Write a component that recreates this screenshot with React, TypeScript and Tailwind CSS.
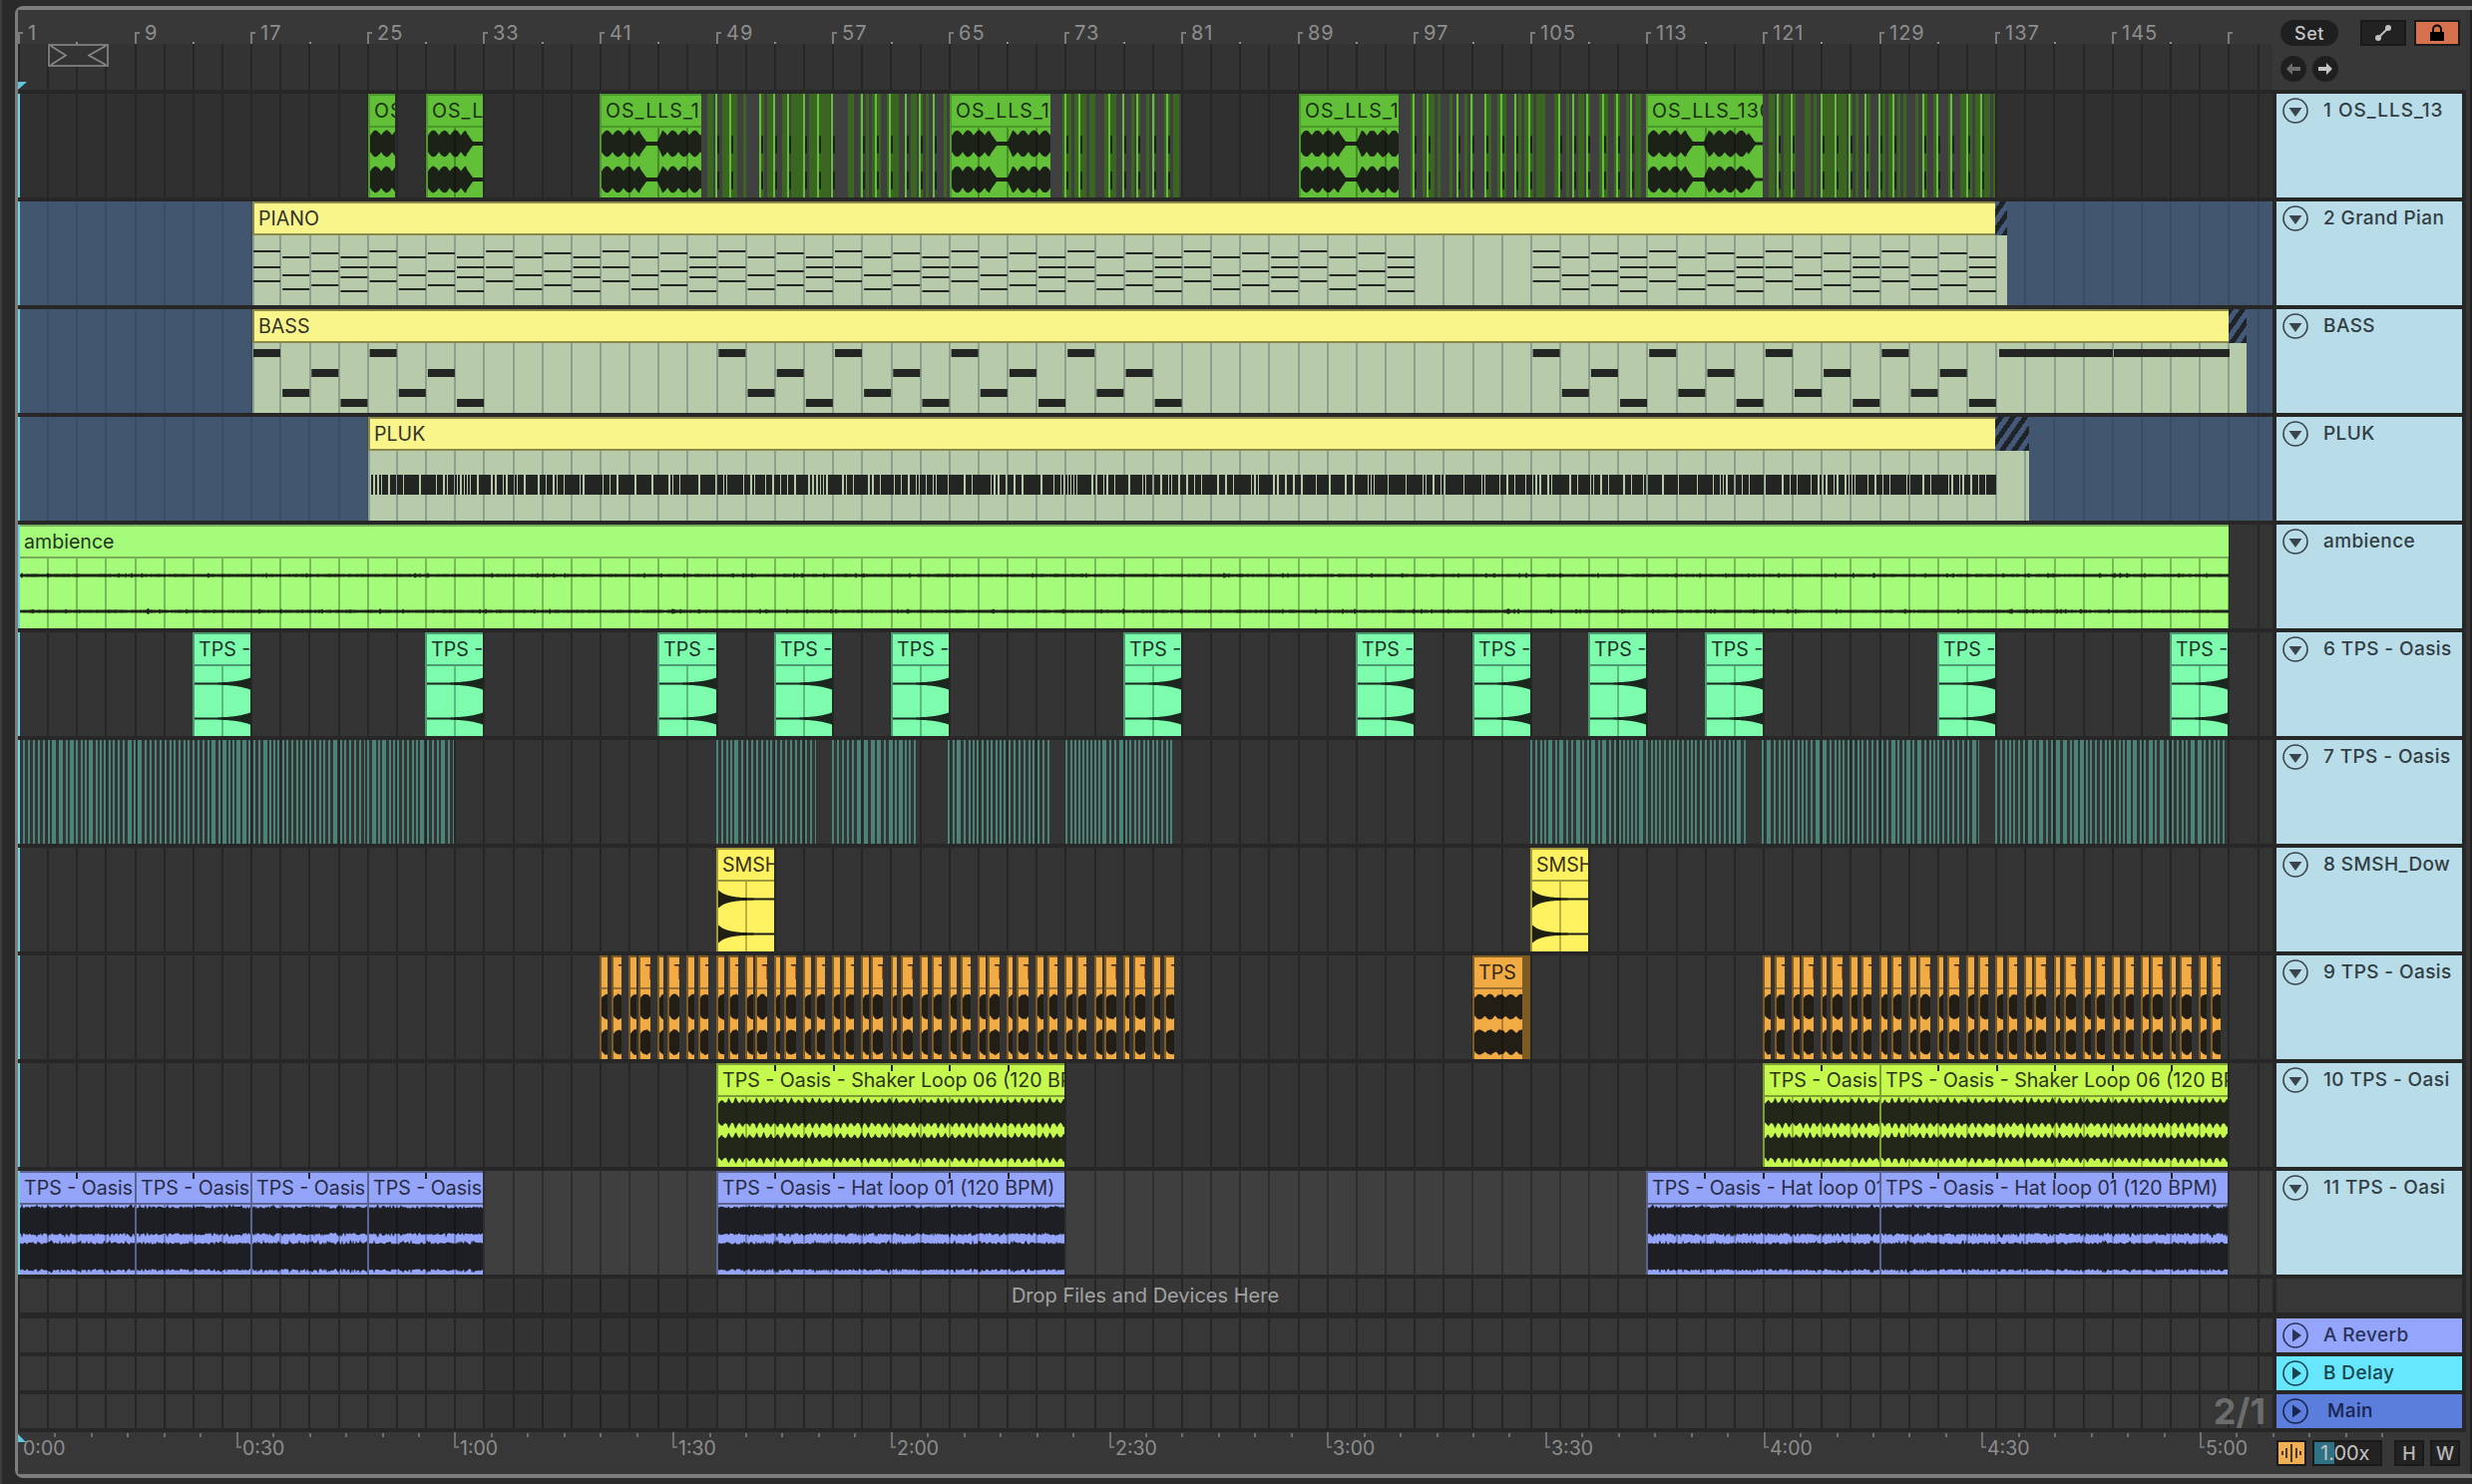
import React from 'react';

// timeline geometry, measured off the arrangement
const ORIGIN = 18;
const BAR = 14.575;
const barX = (bar: number) => Math.round(ORIGIN + (bar - 1) * BAR);
const laneX = (x: number) => x - ORIGIN;

const FONT = "font-['Inter','Liberation_Sans',sans-serif]";
const GRID = 'bg-[repeating-linear-gradient(90deg,#262626_0,#262626_2px,transparent_2px,transparent_29.15px)]';
const GRID_BLUE = 'bg-[repeating-linear-gradient(90deg,#3a4d66_0,#3a4d66_2px,transparent_2px,transparent_29.15px)]';
const GRID_SOFT = 'bg-[repeating-linear-gradient(90deg,#2e2e2e_0,#2e2e2e_2px,transparent_2px,transparent_29.15px)]';

const rng = (seed: number) => () => (seed = (seed * 16807) % 2147483647) / 2147483647;

type Kind = 'os' | 'amb' | 'mint' | 'smsh' | 'orange' | 'lime' | 'peri';

const THEME: Record<Kind, { bg: string; border: string; line: string; text: string; wave: string; cy: [number, number] }> = {
  os: { bg: 'bg-[#62c038]', border: 'border-[#4b9a2b]', line: 'bg-[#4b9a2b]', text: 'text-[#1c3012] tracking-[1px]', wave: '#1d2219', cy: [16, 52] },
  amb: { bg: 'bg-[#a4fc7a]', border: 'border-[#76ad58]', line: 'bg-[#76ad58]', text: 'text-[#24331c]', wave: '#1c2418', cy: [17, 53] },
  mint: { bg: 'bg-[#7dfcae]', border: 'border-[#4a9a70]', line: 'bg-[#4a9a70]', text: 'text-[#1d3328]', wave: '#1b261f', cy: [17.5, 52.5] },
  smsh: { bg: 'bg-[#fff261]', border: 'border-[#a19a3b]', line: 'bg-[#a19a3b]', text: 'text-[#33311a]', wave: '#1f1f14', cy: [17.5, 52.5] },
  orange: { bg: 'bg-[#f1ab45]', border: 'border-[#7f5b24]', line: 'bg-[#9c7030]', text: 'text-[#33260f]', wave: '#231e15', cy: [17.5, 53] },
  lime: { bg: 'bg-[#c6f94e]', border: 'border-[#7e9f32]', line: 'bg-[#7e9f32]', text: 'text-[#2a3312]', wave: '#23271a', cy: [16, 51] },
  peri: { bg: 'bg-[#94a4f9]', border: 'border-[#5a648f]', line: 'bg-[#5a648f]', text: 'text-[#272c44]', wave: '#1d1f25', cy: [16, 52] },
};

const amplitude = (kind: Kind, x: number, w: number, r: () => number): number => {
  switch (kind) {
    case 'os': {
      const m = x % 116;
      if (m > 45 && m < 56) return 2;
      if (m >= 39 && m <= 45) return 2 + (45 - m) * 1.4;
      if (m >= 56 && m <= 60) return 2 + (m - 56) * 2.2;
      if (m > 100) return Math.max(1.5, 12 - (m - 100) * 1.4);
      return 8 + 5 * Math.abs(Math.sin((Math.PI * m) / 11)) + r() * 0.6;
    }
    case 'amb':
      return 1.3 + r() * 0.4 + (r() > 0.975 ? 1.2 : 0);
    case 'mint':
      return 1 + 5 * Math.pow(x / w, 4);
    case 'smsh':
      return 1 + 8 * Math.exp(-x / 9);
    case 'orange':
      return 8.5 + 3.5 * Math.abs(Math.sin(x * 0.3)) + r() * 1.2;
    case 'lime': {
      const t = (x % 7) / 7;
      const scale = 0.55 + 0.45 * Math.abs(Math.sin(Math.floor(x / 7) * 2.3));
      return 9.5 + 7 * scale * Math.pow(1 - Math.abs(2 * t - 1), 2) + r() * 1.2;
    }
    case 'peri':
      return 12.2 + r() * 2.4 + (r() > 0.9 ? 2.6 : 0);
  }
};

const channel = (kind: Kind, w: number, cy: number, seed: number) => {
  const r = rng(seed);
  const top: string[] = [];
  const bottom: string[] = [];
  for (let x = 0; x <= w; x += 1) {
    const a = amplitude(kind, x, w, r);
    top.push(`${x} ${(cy - a).toFixed(1)}`);
    bottom.unshift(`${x} ${(cy + a).toFixed(1)}`);
  }
  return `M${top.join('L')}L${bottom.join('L')}Z`;
};

const gridLines = (left: number, width: number) => {
  const out: number[] = [];
  for (let k = 0; k < 80; k++) {
    const x = Math.round(ORIGIN + 29.15 * k) - left;
    if (x > 2 && x < width) out.push(x);
  }
  return out;
};

const WaveBody: React.FC<{ kind: Kind; left: number; width: number }> = ({ kind, left, width }) => (
  <svg width={width} height={70} className="block shrink-0">
    <path d={channel(kind, width, THEME[kind].cy[0], left * 7 + 11)} fill={THEME[kind].wave} />
    <path d={channel(kind, width, THEME[kind].cy[1], left * 13 + 29)} fill={THEME[kind].wave} />
    {gridLines(left + 2, width).map(x => (
      <rect key={x} x={x} y={0} width={2} height={70} fill="#000" opacity={0.27} />
    ))}
  </svg>
);

const Clip: React.FC<{ kind: Kind; from: number; to: number; name: string; ticks?: boolean; tail?: boolean }> = ({
  kind,
  from,
  to,
  name,
  ticks,
  tail,
}) => {
  const t = THEME[kind];
  const width = to - from;
  const tickXs: number[] = [];
  if (ticks) for (let x = 58.3; x < width - 4; x += 58.3) tickXs.push(Math.round(x) - 2);
  return (
    <div
      className={`absolute top-0 h-[104px] overflow-hidden border-l-2 border-t-2 ${t.bg} ${t.border} ${tail ? 'border-r-[8px]' : ''}`}
      style={{ left: laneX(from), width }}
    >
      <div className={`relative h-[30px] overflow-hidden whitespace-nowrap pl-[4px] text-[19.6px] leading-[30px] ${t.text}`}>
        {name}
        {tickXs.map(x => (
          <span key={x} className="absolute top-0 h-[6px] w-[2px] bg-[#222]" style={{ left: x }} />
        ))}
      </div>
      <div className={`h-[2px] ${t.line}`} />
      <WaveBody kind={kind} left={from} width={width - (tail ? 10 : 2)} />
    </div>
  );
};

// little runs of green slices between the OS_LLS clips
const OsStripes: React.FC<{ from: number; to: number }> = ({ from, to }) => {
  const width = to - from;
  const r = rng(from + 5);
  const bands: { x: number; dark: boolean }[] = [];
  for (let x = 0; x < width; x += 3) bands.push({ x, dark: r() > 0.5 });
  const bright: number[] = [];
  for (let c = 0; c < width; c += 102) {
    [14, 28, 58, 72, 86, 102].forEach(o => {
      if (c + o < width - 1) bright.push(c + o);
    });
  }
  return (
    <svg width={width} height={104} className="absolute top-0" style={{ left: laneX(from) }}>
      {bands.map(b => (
        <rect key={b.x} x={b.x} y={0} width={3} height={104} fill={b.dark ? '#3a6622' : '#404040'} />
      ))}
      {bright.map(x => (
        <g key={x}>
          <rect x={x} y={0} width={2} height={104} fill="#62c038" />
          <rect x={x + 2} y={42} width={2} height={18} rx={1} fill="#1d2219" />
          <rect x={x + 2} y={78} width={2} height={18} rx={1} fill="#1d2219" />
        </g>
      ))}
    </svg>
  );
};

const TealStripes: React.FC<{ from: number; to: number }> = ({ from, to }) => {
  const r = rng(from * 3 + 1);
  const bars: { x: number; w: number }[] = [];
  let x = 0;
  while (x < to - from) {
    const w = r() > 0.8 ? 4 : 2;
    bars.push({ x, w });
    x += w + (r() > 0.6 ? 2 : 3);
  }
  return (
    <svg width={to - from} height={104} className="absolute top-0" style={{ left: laneX(from) }}>
      {bars.map(b => (
        <rect key={b.x} x={b.x} y={0} width={b.w} height={104} fill="#4a8478" />
      ))}
    </svg>
  );
};

type Note = { x: number; y: number; w: number; h: number };

const pianoNotes = (): Note[] => {
  const cols = [
    [15, 31, 45],
    [21, 39, 53],
    [17, 35, 49],
    [21, 31, 41, 55],
  ];
  const out: Note[] = [];
  for (let k = 0; k < 60; k++) {
    const x = 29.15 * k;
    const bar = 17 + k * 2;
    if (bar >= 97 && bar < 105) continue;
    cols[k % 4].forEach(y => out.push({ x: x + 1, y, w: 27, h: 2 }));
  }
  return out;
};

const bassNotes = (): Note[] => {
  const ys = [6, 46, 26, 56];
  const out: Note[] = [];
  for (let k = 0; k < 60; k++) {
    const bar = 17 + k * 2;
    if (bar >= 33 && bar < 49) continue;
    if (bar >= 81 && bar < 105) continue;
    out.push({ x: 29.15 * k + 1, y: ys[k % 4], w: 27, h: 8 });
  }
  const tail = barX(137) - barX(17);
  out.push({ x: tail + 2, y: 6, w: 114, h: 8 }, { x: tail + 117, y: 6, w: 116, h: 8 });
  return out;
};

const plukNotes = (): Note[] => {
  const r = rng(77);
  const out: Note[] = [];
  let x = 3;
  const end = barX(137) - barX(25);
  while (x < end) {
    const v = r();
    const w = v > 0.7 ? 10 + Math.round(r() * 8) : v > 0.3 ? 6 : 2;
    out.push({ x, y: 24, w: Math.min(w, end - x), h: 20 });
    x += w + (r() > 0.5 ? 1 : 2);
  }
  return out;
};

const MidiClip: React.FC<{ name: string; from: number; titleTo: number; to: number; notes: Note[] }> = ({
  name,
  from,
  titleTo,
  to,
  notes,
}) => {
  const width = to - from;
  return (
    <div className="absolute top-0 h-[104px] overflow-hidden" style={{ left: laneX(from), width }}>
      <div className="flex h-[34px]">
        <div
          className="h-[34px] whitespace-nowrap border-y-2 border-l-2 border-[#8b8a48] bg-[#f9f58b] pl-[4px] text-[19.6px] leading-[30px] text-[#33332a]"
          style={{ width: titleTo - from }}
        >
          {name}
        </div>
        <div className="h-[34px] flex-1 bg-[repeating-linear-gradient(-55deg,#1f2428_0,#1f2428_5px,#44597a_5px,#44597a_10px)]" />
      </div>
      <svg width={width} height={70} className="block bg-[#b7caa9]">
        <rect x={0} y={0} width={2} height={70} fill="#8c9f8f" />
        {gridLines(from, width).map(x => (
          <rect key={x} x={x} y={0} width={2} height={70} fill="#8c9f8f" />
        ))}
        {notes.map((n, i) => (
          <rect key={i} x={n.x} y={n.y} width={n.w} height={n.h} fill="#222521" />
        ))}
      </svg>
    </div>
  );
};

const Toggle: React.FC<{ open?: boolean; color: string }> = ({ open, color }) => (
  <svg width={26} height={26} viewBox="0 0 26 26" className="shrink-0">
    <circle cx={13} cy={13} r={12} fill="none" stroke={color} strokeWidth={1.6} />
    {open ? <path d="M6.5 10h13L13 19z" fill={color} /> : <path d="M10 6.5v13L19 13z" fill={color} />}
  </svg>
);

const TrackHead: React.FC<{ name: string; wide?: boolean }> = ({ name, wide }) => (
  <div className="h-[104px] w-[186px] shrink-0 bg-[#b8dde8]">
    <div className={`flex h-[34px] items-center gap-[15px] pl-[6px] text-[19px] font-medium text-[#333d44] ${wide ? 'tracking-[1px]' : 'tracking-[0.4px]'}`}>
      <Toggle open color="#39444b" />
      <span className="whitespace-nowrap pt-[1px]">{name}</span>
    </div>
  </div>
);

const Track: React.FC<{ lane: string; name: string; wide?: boolean; children?: React.ReactNode }> = ({ lane, name, wide, children }) => (
  <div className="flex h-[104px] gap-[4px]">
    <div className={`relative h-[104px] w-[2260px] overflow-hidden ${lane}`}>
      {children}
      <div className="absolute left-0 top-0 h-full w-[2px] bg-[#6fd4e6]" />
    </div>
    <TrackHead name={name} wide={wide} />
  </div>
);

const EmptyLane: React.FC<{ children?: React.ReactNode }> = ({ children }) => (
  <div className={`relative h-[34px] w-[2260px] bg-[#373737] ${GRID}`}>
    <div className="absolute left-[467px] top-0 h-full w-[233px] bg-black/[0.07]" />
    {children}
  </div>
);

const ReturnRow: React.FC<{ name: string; bg: string; text: string; color: string; shift?: boolean; children?: React.ReactNode }> = ({
  name,
  bg,
  text,
  color,
  shift,
  children,
}) => (
  <div className="flex h-[34px] gap-[4px]">
    <EmptyLane>{children}</EmptyLane>
    <div className={`flex h-[34px] w-[186px] items-center gap-[15px] pl-[6px] text-[19px] font-medium tracking-[0.4px] ${bg} ${text}`}>
      <Toggle color={color} />
      <span className={shift ? 'ml-[4px] pt-[1px]' : 'pt-[1px]'}>{name}</span>
    </div>
  </div>
);

const TopRuler: React.FC = () => {
  const marks: number[] = [];
  for (let b = 1; b <= 153; b += 8) marks.push(b);
  const small: number[] = [];
  for (let b = 5; b <= 153; b += 8) small.push(b);
  return (
    <div className="relative h-[34px] bg-[#383838]">
      {marks.map(b => (
        <div key={b} className="absolute top-[22px] h-[12px] w-[5px] border-l-2 border-t-2 border-[#7b7b7b]" style={{ left: laneX(barX(b)) }} />
      ))}
      {marks
        .filter(b => b < 153)
        .map(b => (
          <span key={b} className="absolute top-[11px] text-[20px] leading-[24px] tracking-[1px] text-[#8e8e8e]" style={{ left: laneX(barX(b)) + 10 }}>
            {b}
          </span>
        ))}
      {small.map(b => (
        <div key={b} className="absolute top-[32px] h-[2px] w-[2px] bg-[#8e8e8e]" style={{ left: laneX(barX(b)) }} />
      ))}
    </div>
  );
};

const BottomRuler: React.FC = () => {
  const labels = ['0:00', '0:30', '1:00', '1:30', '2:00', '2:30', '3:00', '3:30', '4:00', '4:30', '5:00'];
  const small: number[] = [];
  for (let i = 1; i < 66; i++) if (i % 6 !== 0) small.push(i * 36.45);
  return (
    <div className="relative h-[42px] w-[2260px]">
      {small.map(x => (
        <div key={x} className="absolute top-[1px] h-[4px] w-[2px] bg-[#6f6f6f]" style={{ left: Math.round(x) }} />
      ))}
      {labels.map((l, i) => (
        <React.Fragment key={l}>
          {i > 0 && <div className="absolute top-0 h-[16px] w-[5px] border-b-2 border-l-2 border-[#6f6f6f]" style={{ left: Math.round(i * 218.7) }} />}
          <span className="absolute top-[4px] text-[19.5px] leading-[24px] text-[#8e8e8e]" style={{ left: Math.round(i * 218.7) + (i > 0 ? 6 : 5) }}>
            {l}
          </span>
        </React.Fragment>
      ))}
      <svg width={10} height={10} className="absolute left-0 top-[2px]">
        <path d="M0 0L8 8H0z" fill="#5fc8dc" />
      </svg>
    </div>
  );
};

const ORANGE_CYCLE = [
  [[0, 8], [12, 22]],
  [[0, 8], [10, 22]],
  [[0, 6], [10, 22]],
  [[0, 8], [12, 22]],
];

const orangeRun = (startBar: number, cols: number) => {
  const out: { from: number; to: number }[] = [];
  for (let k = 0; k < cols; k++) {
    const s = Math.round(ORIGIN + (startBar - 1) * BAR + 29.15 * k);
    ORANGE_CYCLE[k % 4].forEach(([a, b]) => out.push({ from: s + a, to: s + b }));
  }
  return out;
};

const MINT_BARS = [13, 29, 45, 53, 61, 77, 93, 101, 109, 117, 133, 149];
const TEAL_RUNS = [[18, 366], [368, 455], [718, 818], [834, 920], [950, 1052], [1068, 1178], [1534, 1750], [1766, 1984], [2000, 2233]];

const App: React.FC = () => {
  const dark = `bg-[#303030] ${GRID}`;
  const mid = `bg-[#343434] ${GRID}`;
  const blue = `bg-[#42576f] ${GRID_BLUE}`;

  return (
    <div className={`h-[1488px] w-[2478px] overflow-hidden border-l-2 border-[#3c3c3c] bg-[#2a2a2a] pl-[13px] pt-[6px] ${FONT}`}>
      <div className="flex h-[1476px] rounded-l-lg border-b-4 border-l-[3px] border-t-4 border-[#7d7d7d] bg-[#272727]">
        <div className="flex w-[2454px] flex-col gap-[4px]">
          {/* header: beat ruler, scene strip and set controls */}
          <div className="flex h-[80px] gap-[4px] bg-[#383838]">
            <div className="w-[2260px]">
              <TopRuler />
              <div className={`relative h-[46px] bg-[#333333] ${GRID}`}>
                <svg width={62} height={24} className="absolute left-[30px] top-0">
                  <rect x={1} y={1} width={59} height={21} fill="#333333" stroke="#8a8a8a" strokeWidth={1.6} />
                  <path d="M3 2l15 9.5L3 21M58 2L41 11.5 58 21" fill="none" stroke="#8a8a8a" strokeWidth={1.6} />
                </svg>
                <svg width={10} height={10} className="absolute left-0 top-[38px]">
                  <path d="M0 0H9L0 8z" fill="#5fc8dc" />
                </svg>
              </div>
            </div>
            <div className="w-[186px] shrink-0 pl-[4px] pt-[10px]">
              <div className="flex items-center">
                <div className="flex h-[26px] w-[58px] items-center justify-center rounded-full bg-[#1f1f1f] text-[18px] font-medium tracking-[0.5px] text-[#c4c4c4]">
                  Set
                </div>
                <div className="ml-[22px] flex h-[26px] w-[46px] items-center justify-center border-2 border-[#1a1a1a] bg-[#222]">
                  <svg width={18} height={18} viewBox="0 0 18 18">
                    <path d="M4.5 13.5L13.5 4.5" stroke="#c0c0c0" strokeWidth={2} />
                    <circle cx={4} cy={14} r={3} fill="#c0c0c0" />
                    <circle cx={14} cy={4} r={3} fill="#c0c0c0" />
                  </svg>
                </div>
                <div className="ml-[8px] flex h-[26px] w-[46px] items-center justify-center border-2 border-[#1a1a1a] bg-[#d5714f]">
                  <svg width={16} height={18} viewBox="0 0 16 18">
                    <path d="M4 9V5.5a4 4 0 0 1 8 0V9" fill="none" stroke="#000" strokeWidth={2} />
                    <rect x={1} y={8} width={14} height={9} fill="#000" />
                  </svg>
                </div>
              </div>
              <div className="mt-[10px] flex gap-[6px]">
                <div className="flex h-[26px] w-[26px] items-center justify-center rounded-full bg-[#1f1f1f]">
                  <svg width={16} height={14} viewBox="0 0 16 14">
                    <path d="M7 1L1 7l6 6V9h8V5H7z" fill="#6e6e6e" />
                  </svg>
                </div>
                <div className="flex h-[26px] w-[26px] items-center justify-center rounded-full bg-[#1f1f1f]">
                  <svg width={16} height={14} viewBox="0 0 16 14">
                    <path d="M9 1l6 6-6 6V9H1V5h8z" fill="#c4c4c4" />
                  </svg>
                </div>
              </div>
            </div>
          </div>

          <Track lane={dark} name="1 OS_LLS_13" wide>
            <Clip kind="os" from={369} to={396} name="OS_LLS_130" />
            <Clip kind="os" from={427} to={484} name="OS_LLS_130" />
            <Clip kind="os" from={601} to={703} name="OS_LLS_130" />
            <OsStripes from={703} to={952} />
            <Clip kind="os" from={952} to={1053} name="OS_LLS_130" />
            <OsStripes from={1053} to={1184} />
            <Clip kind="os" from={1302} to={1402} name="OS_LLS_130" />
            <OsStripes from={1402} to={1650} />
            <Clip kind="os" from={1650} to={1767} name="OS_LLS_130" />
            <OsStripes from={1767} to={2000} />
          </Track>

          <Track lane={blue} name="2 Grand Pian">
            <MidiClip name="PIANO" from={253} titleTo={2000} to={2012} notes={pianoNotes()} />
          </Track>
          <Track lane={blue} name="BASS">
            <MidiClip name="BASS" from={253} titleTo={2234} to={2252} notes={bassNotes()} />
          </Track>
          <Track lane={blue} name="PLUK">
            <MidiClip name="PLUK" from={369} titleTo={2000} to={2034} notes={plukNotes()} />
          </Track>

          <Track lane={mid} name="ambience">
            <Clip kind="amb" from={18} to={2234} name="ambience" />
          </Track>

          <Track lane={mid} name="6 TPS - Oasis">
            {MINT_BARS.map(b => (
              <Clip key={b} kind="mint" from={barX(b)} to={barX(b + 4)} name="TPS - Oasis" />
            ))}
          </Track>

          <Track lane={mid} name="7 TPS - Oasis">
            {TEAL_RUNS.map(([a, b]) => (
              <TealStripes key={a} from={a} to={b} />
            ))}
          </Track>

          <Track lane={mid} name="8 SMSH_Dow">
            <Clip kind="smsh" from={barX(49)} to={barX(53)} name="SMSH_Down" />
            <Clip kind="smsh" from={barX(105)} to={barX(109)} name="SMSH_Down" />
          </Track>

          <Track lane={mid} name="9 TPS - Oasis">
            {orangeRun(41, 20).map(s => (
              <Clip key={s.from} kind="orange" from={s.from} to={s.to} name={s.to - s.from > 9 ? 'T' : ''} />
            ))}
            <Clip kind="orange" from={barX(101)} to={barX(105)} name="TPS - Oasis" tail />
            {orangeRun(121, 16).map(s => (
              <Clip key={s.from} kind="orange" from={s.from} to={s.to} name={s.to - s.from > 9 ? 'T' : ''} />
            ))}
          </Track>

          <Track lane={mid} name="10 TPS - Oasi">
            <Clip kind="lime" from={barX(49)} to={barX(73)} name="TPS - Oasis - Shaker Loop 06 (120 BPM)" ticks />
            <Clip kind="lime" from={barX(121)} to={barX(129)} name="TPS - Oasis" ticks />
            <Clip kind="lime" from={barX(129)} to={barX(153)} name="TPS - Oasis - Shaker Loop 06 (120 BPM)" ticks />
          </Track>

          <Track lane={`bg-[#3f3f3f] ${GRID_SOFT}`} name="11 TPS - Oasi">
            <Clip kind="peri" from={barX(1)} to={barX(9)} name="TPS - Oasis" ticks />
            <Clip kind="peri" from={barX(9)} to={barX(17)} name="TPS - Oasis" ticks />
            <Clip kind="peri" from={barX(17)} to={barX(25)} name="TPS - Oasis" ticks />
            <Clip kind="peri" from={barX(25)} to={barX(33)} name="TPS - Oasis" ticks />
            <Clip kind="peri" from={barX(49)} to={barX(73)} name="TPS - Oasis - Hat loop 01 (120 BPM)" ticks />
            <Clip kind="peri" from={barX(113)} to={barX(129)} name="TPS - Oasis - Hat loop 01 (120 BPM)" ticks />
            <Clip kind="peri" from={barX(129)} to={barX(153)} name="TPS - Oasis - Hat loop 01 (120 BPM)" ticks />
          </Track>

          {/* drop area */}
          <div className="flex h-[34px] gap-[4px]">
            <EmptyLane>
              <div className="absolute inset-0 flex items-center justify-center text-[20px] text-[#a2a2a2]">Drop Files and Devices Here</div>
            </EmptyLane>
            <div className="h-[34px] w-[186px] bg-[#373737]" />
          </div>

          {/* returns and main */}
          <div className="mt-[2px] flex flex-col gap-[4px]">
            <ReturnRow name="A Reverb" bg="bg-[#95a5fb]" text="text-[#2a3358]" color="#2a3358" />
            <ReturnRow name="B Delay" bg="bg-[#67e7fd]" text="text-[#17454f]" color="#17454f" />
            <ReturnRow name="Main" bg="bg-[#5b7ddb]" text="text-[#1a2450]" color="#1a2450" shift>
              <span className="absolute right-[7px] top-[-2px] text-[36px] font-bold leading-[38px] text-[#6c6c6c]">2/1</span>
            </ReturnRow>
          </div>

          {/* time ruler and view buttons */}
          <div className="flex h-[42px] gap-[4px] bg-[#373737]">
            <BottomRuler />
            <div className="flex w-[186px] items-start gap-[6px] pt-[8px]">
              <div className="flex h-[26px] w-[30px] items-center justify-center border-2 border-[#1a1a1a] bg-[#f0ae55]">
                <svg width={22} height={18} viewBox="0 0 22 18">
                  <path d="M2 7v4M6 4v10M11 0v18M16 4v10M20 7v4" stroke="#1f1f1f" strokeWidth={1.6} />
                </svg>
              </div>
              <div className="relative flex h-[26px] w-[70px] items-center border-2 border-[#1a1a1a] bg-[#222] pl-[6px] text-[20px] text-[#c4c4c4]">
                <div className="absolute left-0 top-0 h-full w-[20px] bg-[#2f7285]" />
                <span className="relative">1.00x</span>
              </div>
              <div className="ml-[6px] flex h-[26px] w-[30px] items-center justify-center border-2 border-[#1a1a1a] bg-[#222] text-[18px] font-medium text-[#b8b8b8]">
                H
              </div>
              <div className="flex h-[26px] w-[30px] items-center justify-center border-2 border-[#1a1a1a] bg-[#222] text-[18px] font-medium text-[#b8b8b8]">
                W
              </div>
            </div>
          </div>
        </div>
        <div className="w-[4px] bg-[#363636]" />
        <div className="w-[2px] bg-[#222]" />
      </div>
    </div>
  );
};

export default App;
